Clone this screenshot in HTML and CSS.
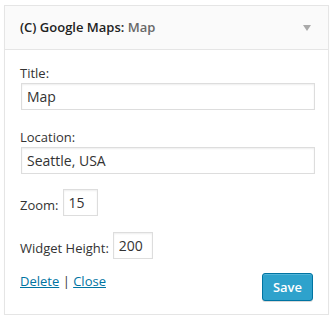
FILE: index.html
```html
<!DOCTYPE html>
<html>
<head>
<meta charset="utf-8">
<link rel="stylesheet" href="styles.css">
</head>
<body>
<div class="widget">
  <div class="widget-top">
    <h3 class="widget-title">(C) Google Maps: <span class="in-title">Map</span></h3>
    <span class="toggle"></span>
  </div>
  <div class="widget-inside">
    <p class="field f1">
      <label>Title:</label>
      <input class="wide" type="text" value="Map">
    </p>
    <p class="field f2">
      <label>Location:</label>
      <input class="wide" type="text" value="Seattle, USA">
    </p>
    <p class="inline i1">
      <label>Zoom:</label>
      <input class="small s1" type="text" value="15">
    </p>
    <p class="inline i2">
      <label>Widget Height:</label>
      <input class="small s2" type="text" value="200">
    </p>
    <div class="actions">
      <div class="links"><a href="#">Delete</a> | <a href="#">Close</a></div>
      <button class="save">Save</button>
    </div>
  </div>
</div>
</body>
</html>
```
FILE: styles.css
```css
html, body { margin: 0; padding: 0; background: #fff; }
body { padding: 5px 0 0 4px; font-family: "Open Sans", sans-serif; color: #444; }
.widget {
  width: 323px;
  border: 1px solid #e5e5e5;
  box-shadow: 0 1px 1px rgba(0,0,0,0.04);
  background: #fff;
}
.widget-top {
  height: 43px;
  background: #fafafa;
  border-bottom: 1px solid #e5e5e5;
  display: flex;
  align-items: center;
  justify-content: space-between;
  padding: 0 17px 0 15px;
}
.widget-title { margin: 0; font-size: 13px; font-weight: 600; color: #222; position: relative; top: -1px; }
.in-title { color: #686868; }
.toggle {
  width: 0; height: 0;
  border-left: 4px solid transparent;
  border-right: 4px solid transparent;
  border-top: 6px solid #aaa;
}
.widget-inside { padding: 14px 15px 13px 15px; }
.field { margin: 0; }
.f1 { margin-bottom: 18px; }
.f2 { margin-bottom: 15px; }
.field label { display: block; font-size: 13px; line-height: 19px; color: #333; }
input {
  font-family: "Open Sans", sans-serif;
  font-size: 14px;
  color: #333;
  border: 1px solid #ddd;
  box-shadow: inset 0 1px 2px rgba(0,0,0,0.07);
  padding: 3px 5px;
  height: 27px;
  box-sizing: border-box;
  outline: none;
  margin: 0;
}
.wide { width: 294px; margin-left: 1px; display: block; }
.inline { margin: 0; display: flex; align-items: flex-end; gap: 4px; }
.i1 { margin-bottom: 16px; }
.i2 { margin-bottom: 13px; }
.inline label { font-size: 13px; line-height: 21px; color: #333; }
.small { height: 27px; }
.s1 { width: 35px; }
.s2 { width: 40px; }
.actions { display: flex; justify-content: space-between; align-items: flex-start; }
.links { font-size: 13px; line-height: 19px; color: #333; }
.links a { color: #0074a2; text-decoration: underline; }
.save {
  font-family: "Open Sans", sans-serif;
  font-size: 13px;
  font-weight: 600;
  color: #fff;
  background: #2ea2cc;
  border: 1px solid #0074a2;
  border-radius: 3px;
  box-shadow: inset 0 1px 0 rgba(120,200,230,0.5), 0 1px 0 rgba(0,0,0,0.15);
  height: 28px;
  padding: 0 10px;
  margin-top: 1px;
}
```
